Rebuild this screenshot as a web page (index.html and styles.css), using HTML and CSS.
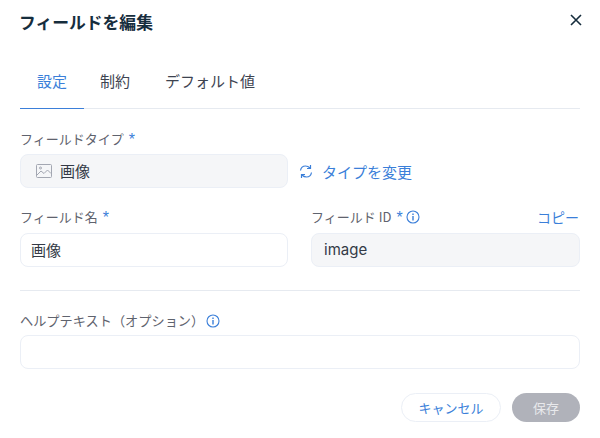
FILE: index.html
```html
<!DOCTYPE html>
<html lang="ja">
<head>
<meta charset="utf-8">
<title>フィールドを編集</title>
<link rel="stylesheet" href="styles.css">
</head>
<body>
<div class="dialog">
  <header class="head">
    <h1 class="title">フィールドを編集</h1>
    <svg class="close" width="12" height="12" viewBox="0 0 12 12"><path d="M1 1l10 10M11 1L1 11" stroke="#162d3d" stroke-width="1.6" fill="none"/></svg>
  </header>
  <nav class="tabs">
    <span class="tab active">設定</span>
    <span class="tab">制約</span>
    <span class="tab">デフォルト値</span>
  </nav>
  <section class="type-block">
    <div class="label">フィールドタイプ<span class="req">*</span></div>
    <div class="type-row">
      <div class="box grey type-box">
        <svg width="16" height="14" viewBox="0 0 16 14" fill="none" stroke="#a3a7b2" stroke-width="1"><rect x=".5" y=".5" width="15" height="13" rx="1"/><path d="M1 11l4-4 3 2.500L11.500 6 15 9.500"/><circle cx="4.500" cy="4" r="1"/></svg>
        <span>画像</span>
      </div>
      <div class="change">
        <svg width="14" height="15" viewBox="0 0 14 15" fill="none" stroke="#3b7fd9" stroke-width="1.2"><path d="M1.500 6.500C2 3.500 4 2 6.500 2c1.500 0 3 .5 4.500 2"/><path d="M11.500 1v3.500H8"/><path d="M12.500 8.500C12 11.500 10 13 7.500 13c-1.500 0-3-.5-4.500-2"/><path d="M2.500 14v-3.500H6"/></svg>
        <span>タイプを変更</span>
      </div>
    </div>
  </section>
  <section class="two">
    <div class="field">
      <div class="label-row"><div class="label">フィールド名<span class="req">*</span></div></div>
      <div class="box">画像</div>
    </div>
    <div class="field">
      <div class="label-row">
        <div class="label id-label"><span>フィールド ID<span class="req">*</span></span>
          <svg class="info" width="14" height="14" viewBox="0 0 14 14" fill="none"><circle cx="7" cy="7" r="6" stroke="#3b7fd9" stroke-width="1.100"/><rect x="6.300" y="6" width="1.400" height="4.500" fill="#3b7fd9"/><rect x="6.300" y="3.500" width="1.400" height="1.500" fill="#3b7fd9"/></svg>
        </div>
        <span class="copy">コピー</span>
      </div>
      <div class="box grey latin">image</div>
    </div>
  </section>
  <hr class="rule">
  <section class="help">
    <div class="label help-label">ヘルプテキスト（オプション）
      <svg class="info" width="14" height="14" viewBox="0 0 14 14" fill="none"><circle cx="7" cy="7" r="6" stroke="#3b7fd9" stroke-width="1.100"/><rect x="6.300" y="6" width="1.400" height="4.500" fill="#3b7fd9"/><rect x="6.300" y="3.500" width="1.400" height="1.500" fill="#3b7fd9"/></svg>
    </div>
    <div class="box"></div>
  </section>
  <footer class="foot">
    <span class="btn cancel">キャンセル</span>
    <span class="btn save">保存</span>
  </footer>
</div>
</body>
</html>
```
FILE: styles.css
```css
* { box-sizing: border-box; }
html, body { margin: 0; height: 100%; background: #fff; }
body { font-family: "Noto Sans CJK JP", "Noto Sans", sans-serif; color: #162d3d; }
.dialog { width: 600px; height: 438px; padding: 0 20px; overflow: hidden; }
.head { display: flex; justify-content: space-between; align-items: center; height: 46px; }
.title { margin: 0 0 2px -1px; font-size: 16.8px; line-height: 24px; font-weight: 700; }
.close { margin-right: -2px; margin-top: -6px; }
.tabs { display: flex; height: 63px; border-bottom: 1px solid #e6eaf0; align-items: stretch; }
.tab { font-size: 15px; line-height: 22px; padding: 24px 0 0; white-space: nowrap; color: #3d4350; }
.tab:nth-child(2) { margin-left: 16px; }
.tab:nth-child(3) { margin-left: 35px; }
.tab.active { color: #3b7fd9; padding-left: 17px; margin-bottom: -1px; border-bottom: 1px solid #3b7fd9; width: 64px; }
.label { font-size: 13px; line-height: 20px; height: 20px; color: #5f636e; }
.req { color: #3b7fd9; font-family: "Liberation Sans", sans-serif; font-size: 16px; line-height: 1; margin-left: 5px; vertical-align: -1px; }
.type-block { margin-top: 20px; }
.type-row { display: flex; align-items: center; margin-top: 5px; }
.box { height: 34px; border: 1px solid #ebeff6; border-radius: 8px; font-size: 15px; line-height: 32px; padding: 0 10px; color: #333a46; background: #fff; }
.box.grey { background: #f5f6f8; }
.type-box { width: 268px; display: flex; align-items: center; gap: 8px; padding-left: 15px; }
.change { display: flex; align-items: center; gap: 9px; margin-left: 11px; color: #3b7fd9; font-size: 15px; }
.two { display: grid; grid-template-columns: 268px 269px; column-gap: 23px; margin-top: 19px; }
.field .box { line-height: 31px; }
.label-row { display: flex; justify-content: space-between; align-items: center; height: 20px; margin-bottom: 6px; }
.id-label { display: flex; align-items: center; gap: 3px; }
.help-label { display: flex; align-items: center; gap: 2px; font-size: 13.2px; }
.copy { color: #3b7fd9; font-size: 14px; margin-right: 1px; }
.latin { font-family: "Inter", "Noto Sans", sans-serif; font-size: 15px; padding-left: 12px; }
.rule { border: 0; border-top: 1px solid #e6eaf0; margin: 23px 0 0; }
.help { margin-top: 20px; }
.help-label { margin-bottom: 4px; }
.foot { display: flex; justify-content: flex-end; gap: 11px; margin-top: 24px; }
.btn { height: 29px; border-radius: 15px; font-size: 13px; line-height: 27px; text-align: center; border: 1px solid transparent; }
.cancel { width: 100px; color: #3b7fd9; border-color: #ebeff6; background: #fff; }
.save { width: 68px; color: #e8e9ec; background: #b0b2ba; }
```
